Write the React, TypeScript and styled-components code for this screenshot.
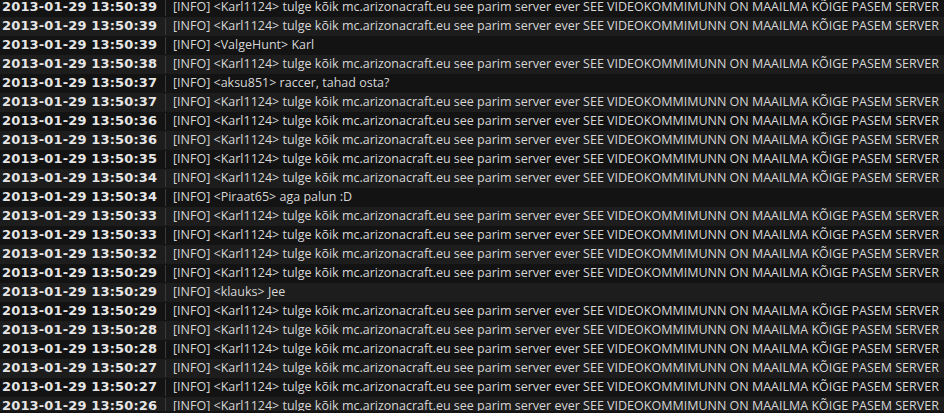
import React from "react";
import styled, { createGlobalStyle } from "styled-components";

const Global = createGlobalStyle`
  html, body { margin: 0; padding: 0; background: #131313; overflow: hidden; }
`;

const Log = styled.div`
  width: 944px;
  height: 413px;
  overflow: hidden;
  background: #131313;
  display: flex;
  flex-direction: column;
  margin-top: -2px;
`;

const Row = styled.div<{ $alt: boolean }>`
  display: flex;
  align-items: center;
  height: 19px;
  flex: 0 0 19px;
  box-sizing: border-box;
  background: ${(p) => (p.$alt ? "#1d1d1d" : "#131313")};
`;

const Time = styled.div`
  width: 166px;
  flex: 0 0 166px;
  box-sizing: border-box;
  padding: 0 0 2px 2px;
  font-family: "DejaVu Sans", sans-serif;
  font-weight: bold;
  font-size: 13px;
  line-height: 15px;
  letter-spacing: 0.15px;
  color: #e6e6e6;
  white-space: nowrap;
  align-self: stretch;
  display: flex;
  align-items: center;
  border-right: 1px solid #3a3a3a;
  margin: 1px 0;
`;

const Msg = styled.div`
  padding: 0 0 2px 7px;
  font-family: "Open Sans", sans-serif;
  font-size: 12.5px;
  line-height: 15px;
  color: #d6d6d6;
  white-space: nowrap;
`;

const SPAM =
  "tulge kõik mc.arizonacraft.eu see parim server ever SEE VIDEOKOMMIMUNN ON MAAILMA KÕIGE PASEM SERVER";

const rows: [string, string, string][] = [
  ["39", "Karl1124", SPAM],
  ["39", "Karl1124", SPAM],
  ["39", "ValgeHunt", "Karl"],
  ["38", "Karl1124", SPAM],
  ["37", "aksu851", "raccer, tahad osta?"],
  ["37", "Karl1124", SPAM],
  ["36", "Karl1124", SPAM],
  ["36", "Karl1124", SPAM],
  ["35", "Karl1124", SPAM],
  ["34", "Karl1124", SPAM],
  ["34", "Piraat65", "aga palun :D"],
  ["33", "Karl1124", SPAM],
  ["33", "Karl1124", SPAM],
  ["32", "Karl1124", SPAM],
  ["29", "Karl1124", SPAM],
  ["29", "klauks", "Jee"],
  ["29", "Karl1124", SPAM],
  ["28", "Karl1124", SPAM],
  ["28", "Karl1124", SPAM],
  ["27", "Karl1124", SPAM],
  ["27", "Karl1124", SPAM],
  ["26", "Karl1124", SPAM],
];

export default function App() {
  return (
    <>
      <Global />
      <Log>
        {rows.map(([s, user, text], i) => (
          <Row key={i} $alt={i % 2 === 1}>
            <Time>{`2013-01-29 13:50:${s}`}</Time>
            <Msg>{`[INFO] <${user}> ${text}`}</Msg>
          </Row>
        ))}
      </Log>
    </>
  );
}
